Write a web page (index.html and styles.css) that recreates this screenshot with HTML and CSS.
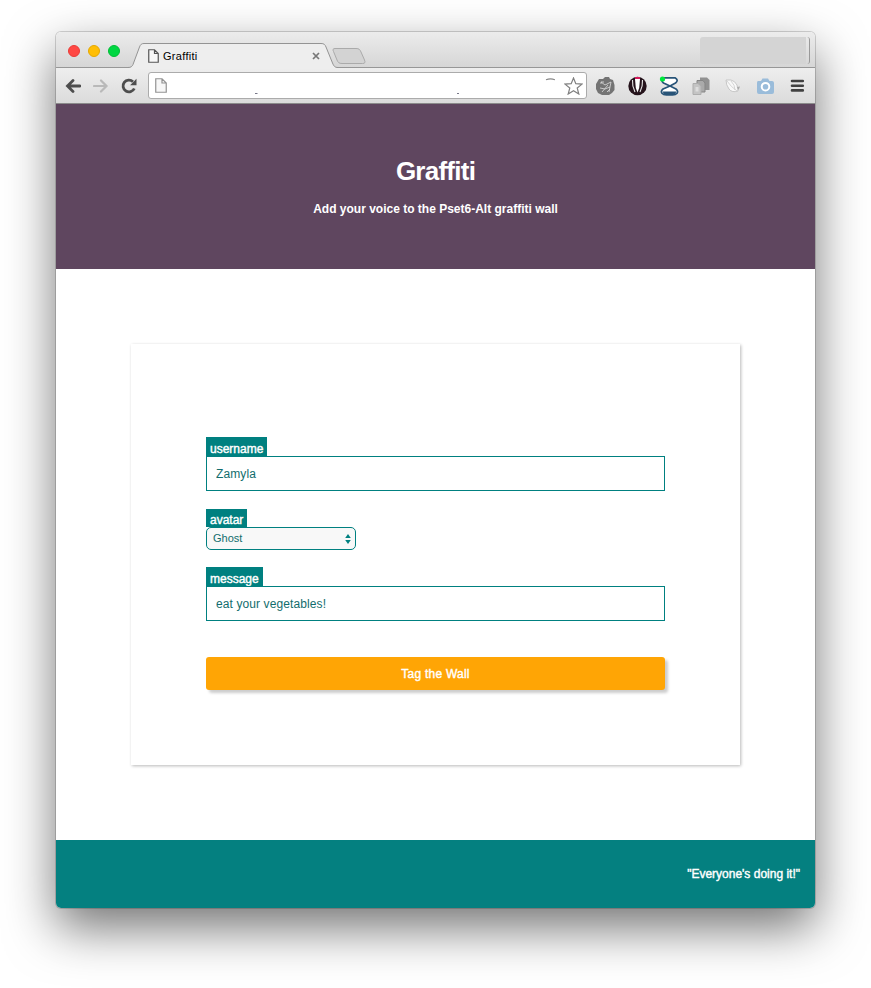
FILE: index.html
```html
<!DOCTYPE html>
<html lang="en">
<head>
<meta charset="utf-8">
<title>Graffiti</title>
<link rel="stylesheet" href="styles.css">
</head>
<body>
<div class="window">
  <div class="titlebar">
    <div class="lights"><i class="red"></i><i class="yellow"></i><i class="green"></i></div>
    <div class="tab">
      <svg class="tab-shape" width="240" height="26" viewBox="0 0 240 26"><path class="tab-fill" d="M-2 24.500C1 24.500 2 23.500 3 21.500L9.500 4C10.500 1.500 11.500.5 14 .5H191C194 .5 195 1.500 196 4L202.500 20C204 23.500 205 24.500 208 24.500V26H-2Z"/><path class="tab-line" d="M-2 24.500C1 24.500 2 23.500 3 21.500L9.500 4C10.500 1.500 11.500.5 14 .5H191C194 .5 195 1.500 196 4L202.500 20C204 23.500 205 24.500 208 24.500"/><path class="new-tab" d="M205 5.500H226C229 5.500 230 6.500 231 9L234.500 17C235.500 19.500 235 20.500 232.500 20.500H212C209 20.500 208 19.500 207 17L203.500 8.500C202.500 6.500 203 5.500 205 5.500Z"/></svg>
      <svg class="page" width="11" height="14" viewBox="0 0 11 14"><path d="M.75.75H6.500L10.250 4.500V13.250H.75ZM6.500.75V4.500H10.250" fill="#f8f8f8" stroke="#555" stroke-width="1.200"/></svg>
      <span class="tab-name">Graffiti</span>
      <svg class="close" width="8" height="8" viewBox="0 0 8 8"><path d="M1 1L7 7M7 1L1 7" stroke="#777" stroke-width="1.700"/></svg>
    </div>
    <div class="profile"></div>
  </div>
  <div class="toolbar">
    <svg class="back" width="16" height="14" viewBox="0 0 16 14"><path d="M15 7H2.500M8 1.500L2.500 7L8 12.500" fill="none" stroke="#4d4d4d" stroke-width="2.800" stroke-linecap="round"/></svg>
    <svg class="forward" width="16" height="14" viewBox="0 0 16 14"><path d="M1 7H13.500M8 1.500L13.500 7L8 12.500" fill="none" stroke="#b9b9b9" stroke-width="2.200" stroke-linecap="round"/></svg>
    <svg class="reload" width="16" height="16" viewBox="0 0 16 16"><path d="M13.300 10.500A5.900 5.900 0 1 1 12 3.700" fill="none" stroke="#4d4d4d" stroke-width="2.800"/><path d="M15.500.8V7.200H9.100Z" fill="#4d4d4d"/></svg>
    <div class="address">
      <svg class="page-address" width="12" height="15" viewBox="0 0 12 15"><path d="M.75.75H7L11.250 5V14.250H.75ZM7 .75V5H11.250" fill="#f7f7f7" stroke="#929292" stroke-width="1.200"/></svg>
      <svg class="marks" width="300" height="20" viewBox="0 0 300 20"><path d="M0 17.500H2.500M202 17.500H204" stroke="#778"/><path d="M291 3.800Q295.500 2 300 3.800" fill="none" stroke="#888" stroke-width="1.200"/></svg>
      <svg class="star" width="19" height="18" viewBox="0 0 19 18"><path d="M9.500 1L11.800 6.700L18 7.100L13.200 11L14.800 17L9.500 13.700L4.200 17L5.800 11L1 7.100L7.200 6.700Z" fill="#fff" stroke="#808080" stroke-width="1.200"/></svg>
    </div>
    <div class="extensions">
      <svg width="20" height="20" viewBox="0 0 20 20"><path d="M4 3L8 3L10 1H14L15 3L18 4L19.500 9V14L17 17L14 19H7L3 17L1 13V8Z" fill="#747474"/><path d="M6 6L10 9L16 6L14 16M6 8V6H9M7 16L13 9M5 12L10 13L15 11M12 16L15 13" fill="none" stroke="#ddd" stroke-width=".8"/></svg>
      <svg width="20" height="20" viewBox="0 0 20 20"><circle cx="10.500" cy="10" r="9.200" fill="#25131b"/><path d="M8 3H13L12.200 12L10.500 16.500L8.800 12Z" fill="#fff"/><path d="M5.500 4Q5 10 8 16M15.500 4Q16 10 13 16" fill="none" stroke="#e8e8e8" stroke-width="1.100"/><path d="M8 2H13" stroke="#e71b62" stroke-width="1.800"/></svg>
      <svg width="20" height="20" viewBox="0 0 20 20"><path d="M5 1.800H16Q20 4 16.500 7L11 10L4.500 7Q1 4 5 1.800ZM11 10L17 13Q20.500 16 16.500 18.300Q10.500 19.500 4.500 18.300Q.5 16 4 13Z" fill="#fff" stroke="#285478" stroke-width="1.700" stroke-linejoin="round"/><path d="M3.500 15.500H17.500L16 18.300H5Z" fill="#285478"/><circle cx="3.500" cy="3" r="2.600" fill="#00e83d"/></svg>
      <svg width="20" height="20" viewBox="0 0 20 20"><path d="M9 1.500H16L18.500 4V14H9Z" fill="#929292"/><path d="M6 4.500H12L14 7V16H6Z" fill="#aaa" stroke="#858585"/><path d="M2 7.500H7L10 10V18.500H2Z" fill="#c4c4c4" stroke="#adadad"/><path d="M4.500 11H7.500V15.500H4.500Z" fill="#ddd"/></svg>
      <svg width="20" height="20" viewBox="0 0 20 20"><path d="M3 4L8 4Q12 5 14 9L15 15Q9 17 6 13Q3 9 3 4Z" fill="#f8f8f8" stroke="#bdbdbd" stroke-width=".8"/><path d="M4 5Q8 11 14 15M8 5Q12 9 12 14" fill="none" stroke="#ccc" stroke-width=".8"/><path d="M14 11L17 10.500L15.500 14Z" fill="#aaa"/></svg>
      <svg width="20" height="20" viewBox="0 0 20 20"><path d="M3 5H6L7.500 2.500H13L14.500 5H17Q19 5 19 7V16Q19 18 17 18H4Q2 18 2 16V7Q2 5 3 5Z" fill="#9abcda"/><circle cx="10.500" cy="10.700" r="3.800" fill="#9abcda" stroke="#fff" stroke-width="2"/></svg>
      <svg width="20" height="20" viewBox="0 0 20 20"><path d="M5 5H15.800M5 9.700H15.800M5 14.400H15.800" stroke="#414141" stroke-width="2.600" stroke-linecap="round"/></svg>
    </div>
  </div>
  <header class="hero">
    <h1>Graffiti</h1>
    <p>Add your voice to the Pset6-Alt graffiti wall</p>
  </header>
  <main>
    <form class="card">
      <label for="username">username</label>
      <input id="username" type="text" value="Zamyla">
      <label class="label-avatar" for="avatar">avatar</label>
      <div class="select" id="avatar"><span>Ghost</span><svg width="6" height="10" viewBox="0 0 6 10"><path d="M3 0L5.800 4H.2ZM3 10L5.800 6H.2Z" fill="#008080"/></svg></div>
      <label class="label-message" for="message">message</label>
      <input id="message" type="text" value="eat your vegetables!">
      <button type="button">Tag the Wall</button>
    </form>
  </main>
  <footer>"Everyone's doing it!"</footer>
</div>
</body>
</html>
```
FILE: styles.css
```css
* { box-sizing: border-box; }
body {
  margin: 0;
  padding: 32px 56px 80px;
  background: #fff;
  font: 12px "Liberation Sans", Arial, sans-serif;
  height: 988px;
  overflow: hidden;
}
svg { display: block; flex: none; }
.window {
  width: 759px;
  height: 876px;
  border-radius: 5px;
  box-shadow: 0 0 0 1px rgba(0,0,0,.16), 0 20px 50px rgba(0,0,0,.55);
}
.titlebar {
  height: 36px;
  display: flex;
  border-radius: 5px 5px 0 0;
  background: linear-gradient(#ececec, #d6d6d6);
  border-bottom: 1px solid #979797;
}
.lights { display: flex; gap: 8px; padding: 13px 0 0 12px; width: 74px; flex: none; }
.lights i { width: 12px; height: 12px; border-radius: 50%; border: 1px solid; }
.lights .red { background: #ff4844; border-color: #e93b37; }
.lights .yellow { background: #ffbe05; border-color: #e5a800; }
.lights .green { background: #00d742; border-color: #00bd36; }
.tab { position: relative; display: flex; align-items: flex-start; width: 216px; height: 25px; margin-top: 11px; }
.tab-shape { position: absolute; left: 0; top: 0; overflow: visible; }
.tab-fill { fill: #eee; }
.tab-line { fill: none; stroke: #949494; }
.new-tab { fill: #d3d3d3; stroke: #aaa; }
.page { position: relative; margin: 6px 0 0 18px; }
.tab-name { position: relative; margin: 6px 0 0 4px; font-size: 11px; line-height: 14px; letter-spacing: .3px; color: #000; width: 149px; }
.close { position: relative; margin-top: 9px; }
.profile { width: 110px; height: 27px; margin: 5px 5px 0 auto; border-right: 1px solid #999; border-radius: 3px; background: linear-gradient(90deg, #d4d4d4 106px, transparent 106px); }
.toolbar {
  height: 36px;
  display: flex;
  align-items: center;
  padding: 0 8px 0 9px;
  background: linear-gradient(#eee, #dbdbdb);
  border-bottom: 1px solid #8b8b8b;
}
.forward { margin-left: 12px; }
.reload { margin-left: 12px; }
.address {
  display: flex;
  align-items: center;
  flex: none;
  width: 439px;
  height: 27px;
  margin-left: 11px;
  padding: 0 3px 0 6px;
  background: #fff;
  border: 1px solid #ababab;
  border-radius: 3px;
}
.marks { margin-left: 88px; }
.star { margin-left: auto; }
.extensions { display: flex; gap: 12px; margin-left: 8px; }
.hero {
  height: 165px;
  background: #5f465f;
  color: #fff;
  text-align: center;
}
.hero h1 { margin: 0; padding-top: 52px; font-size: 26px; line-height: 30px; letter-spacing: -.75px; }
.hero p { margin: 16px 0 0; font-weight: bold; line-height: 14px; }
main { height: 571px; padding: 75px; background: #fff; }
.card { height: 421px; padding: 93px 75px 0; display: flex; flex-direction: column; background: #fff; box-shadow: 1px 1px 3px rgba(0,0,0,.28); }
label {
  align-self: flex-start;
  height: 19px;
  padding: 5px 3.700px 0 4px;
  background: #008080;
  color: #fff;
  line-height: 14px;
  -webkit-text-stroke: .4px #fff;
}
input {
  height: 35px;
  padding: 0 9px;
  border: 1px solid #008080;
  border-radius: 0;
  background: #fff;
  color: #126d6d;
  font: inherit;
  letter-spacing: .1px;
}
.label-avatar { margin-top: 18px; height: 18px; padding-top: 4px; }
.label-message { margin-top: 17px; padding-right: 4.300px; }
.select {
  display: flex;
  align-items: center;
  justify-content: space-between;
  width: 150px;
  height: 23px;
  padding: 0 4px 0 6px;
  border: 1px solid #008080;
  border-radius: 5px;
  background: #f8f8f8;
  color: #126d6d;
  font-size: 11px;
}
.select span { padding-bottom: 2px; }
button {
  height: 33px;
  margin-top: 36px;
  border: 0;
  border-radius: 3px;
  background: #ffa505;
  box-shadow: 3px 3px 3px rgba(0,0,0,.2);
  color: #fff;
  font: inherit;
  letter-spacing: .25px;
  -webkit-text-stroke: .4px #fff;
}
footer {
  height: 68px;
  padding: 27px 15px 0;
  border-radius: 0 0 5px 5px;
  background: #048080;
  color: #fff;
  text-align: right;
  line-height: 14px;
  -webkit-text-stroke: .4px #fff;
}
```
